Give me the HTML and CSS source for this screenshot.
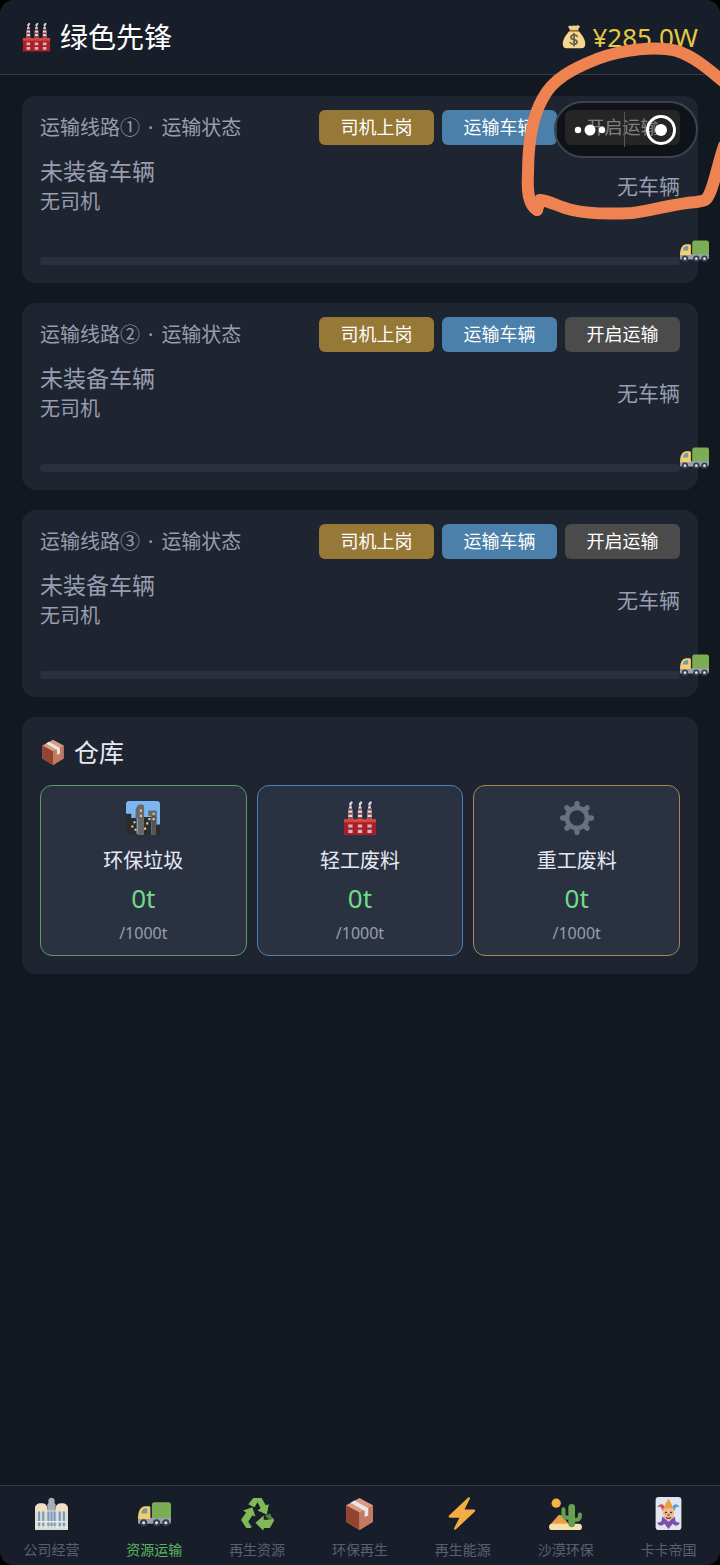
FILE: index.html
```html
<!DOCTYPE html>
<html lang="zh-CN">
<head>
<meta charset="utf-8">
<meta name="viewport" content="width=device-width, initial-scale=1">
<title>绿色先锋</title>
<link rel="stylesheet" href="styles.css">
</head>
<body>
<svg class="sprite" aria-hidden="true">
  <symbol id="factory" viewBox="0 0 32 32">
    <path fill="#dfe1e6" d="M5 10 5.800 5h2.400l.8 5v8H5zM14 10l.8-5h2.400l.8 5v8h-4zM23 10l.8-5h2.400l.8 5v8h-4z"/>
    <path fill="#a63f4c" d="M5.400 7h3.200l.3 2H5.100zM14.400 7h3.200l.3 2h-3.800zM23.400 7h3.200l.3 2h-3.800zM5 11h4v2H5zM14 11h4v2h-4zM23 11h4v2h-4zM5 15h4v2H5zM14 15h4v2h-4zM23 15h4v2h-4z"/>
    <path fill="none" stroke="#d5d8de" stroke-width="2.200" stroke-linecap="round" d="M7 3.500V2.500L8 1.500M16 3.500V2.500l1-1M25 3.500V2.500l1-1"/>
    <path fill="#ab1f2c" d="M1 18h30v14H1z"/>
    <path fill="#d3493c" d="M1 17h30v3H1z"/>
    <path fill="#d8b5b9" d="M5 22h4v3H5zM14 22h4v3h-4zM23 22h4v3h-4zM5 27h4v3H5zM14 27h4v3h-4zM23 27h4v3h-4z"/>
  </symbol>
  <symbol id="money" viewBox="0 0 32 32">
    <path fill="#f4d890" d="M10 8h12c4 4 9 11 9 17 0 4-2 6-5 6H6c-3 0-5-2-5-6C1 19 6 12 10 8z"/>
    <path fill="#f0cf86" d="M8 2c3-2 4 0 6-1s3 0 4 0 3-2 6 1l-3 5H11z"/>
    <path stroke="#b8793f" stroke-width="2" stroke-linecap="round" d="M10.500 8h11"/>
    <path fill="none" stroke="#69614f" stroke-width="2.400" stroke-linecap="round" d="M20 15c-2-3-8-2-8 1.500 0 4 8 2 8 6 0 4-7 4-9 1M16 11.500v16"/>
  </symbol>
  <symbol id="truck" viewBox="0 0 32 32">
    <rect x="13.500" y="5" width="18.500" height="17" rx="2.500" fill="#7bad53"/>
    <path fill="#9aa1ae" d="M0 20h32v4c0 1-1 2-2 2H1c-1 0-1-1-1-2z"/>
    <path fill="#f8ce6a" d="M0 21c0-8 3-12 7-12h4l1 1v11z"/>
    <path fill="#7398b0" d="M3 16c1-4 2-5 6-5v5z"/>
    <g fill="#dde2e8" stroke="#353f4b" stroke-width="2"><circle cx="5.500" cy="25" r="2.500"/><circle cx="18" cy="25" r="2.500"/><circle cx="27" cy="25" r="2.500"/></g>
  </symbol>
  <symbol id="box" viewBox="0 0 32 32">
    <path fill="#d99a83" d="M16 1 29 8v16L16 32 3 24V8z"/>
    <path fill="#93432f" d="M3 8l13 7v17L3 24z"/>
    <path fill="#c47a61" d="M16 15l13-7v16l-13 8z"/>
    <path fill="#e9e7e5" d="M7.500 5.500 11 3.500 24.500 11v7L21 19.500v-6z"/>
  </symbol>
  <symbol id="city" viewBox="0 0 32 32">
    <rect width="32" height="31" rx="3" fill="#7cb6f1"/>
    <path fill="#2b2c2e" d="M0 12h5v4h5v16H0zM15 15h9v17h-9zM28 22h4v10h-4z"/>
    <path fill="#68696c" d="M9 8l2-4 3-1 3 1v28h-6V16H9zM21 9h8v13h-5v-8h-3zM24 20h4v12h-4z"/>
    <path fill="#505255" d="M24 14h4v18h-3z"/>
    <path fill="#e9cc7d" d="M13 8h2v2h-2zM13 13h2v2h-2zM7 19h2v2H7zM5 23h2v2H5zM8 26h2v2H8zM21 16h2v2h-2zM19 20h2v2h-2zM17 25h2v2h-2zM25 11h2v2h-2zM25 16h2v2h-2z"/>
  </symbol>
  <symbol id="gear" viewBox="0 0 32 32">
    <circle cx="16" cy="16" r="9.500" fill="none" stroke="#6a717e" stroke-width="4.500"/>
    <path stroke="#6a717e" stroke-width="5" stroke-linecap="round" d="M16 2.500V5M16 27v2.500M2.500 16H5M27 16h2.500M6.500 6.500l2 2M23.500 23.500l2 2M25.500 6.500l-2 2M8.500 23.500l-2 2"/>
  </symbol>
  <symbol id="office" viewBox="0 0 32 32">
    <path fill="#dedbd2" d="M0 12h32v20H0z"/>
    <path fill="#efdfc4" d="M0 14v-3c0-3 2-5 6-5s6 2 6 5v3zM20 14v-3c0-3 2-5 6-5s6 2 6 5v3z"/>
    <path fill="#a9adb5" d="M12 13V7l1-1V3c1-3 5-3 6 0v3l1 1v6z"/>
    <path fill="#719ac0" d="M3 14h2v16H3zM7 14h2v16H7zM12 14h2v16h-2zM15 14h2v16h-2zM18 14h2v16h-2zM23 14h2v16h-2zM27 14h2v16h-2z"/>
    <path stroke="#eceae5" stroke-width="1.500" d="M0 24h32M0 29h32"/>
  </symbol>
  <symbol id="recycle" viewBox="0 0 32 32">
    <path fill="#4c7f34" d="M8 7 12 1h5l-4 9zM3 19l8 10-5 1-5-8zM23 18l5-2 4 7-3 1z"/>
    <path fill="#80b958" d="M12 1h8l4 7 3-1-2 10-9-4 3-2-5-10zM2 13l9-3 3 9-3-1-4 6 3 6H5l-5-8 5-7zM14 25l8-7v4h7l2-2 1 3-4 7h-6v3z"/>
    <path fill="#80b958" d="M12 1h3l1 4-3 5-6-3z"/>
  </symbol>
  <symbol id="bolt" viewBox="0 0 32 32">
    <path fill="#f4ad43" d="M21 1 3 18c-1 1 0 2 1 2h9L8 30c-1 2 1 2 2 1l18-17c1-1 0-2-1-2h-9l5-10c1-2-1-2-2-1z"/>
  </symbol>
  <symbol id="desert" viewBox="0 0 32 32">
    <circle cx="7" cy="6" r="4.500" fill="#f4b247"/>
    <path fill="#e9a044" d="M1 27 9 18c1-1 2-1 3 0l8 9z"/>
    <rect y="26" width="32" height="6" rx="3" fill="#f8dfac"/>
    <g fill="none" stroke="#659e4f" stroke-linecap="round"><path stroke-width="6.500" d="M22 10v16"/><path stroke-width="4" d="M22 20h-5c-2 0-3-1-3-4v-4M22 22h5c2 0 3-1 3-5"/></g>
    <path fill="none" stroke="#80b75e" stroke-width="1" stroke-dasharray="1 2" d="M20.500 9v17M23.500 9v17"/>
  </symbol>
  <symbol id="joker" viewBox="0 0 32 32">
    <rect x="3.500" width="25" height="32" rx="3" fill="#e3e6f1"/>
    <path fill="#cf5057" d="M13 12C12 7 8 5 5 10c5-2 4 3 6 4z"/>
    <path fill="#56a0c8" d="M19 12c1-5 5-7 8-2-5-2-4 3-6 4z"/>
    <path fill="#eda13b" d="M12 12c0-5 2-7 4-10 2 3 4 5 4 10z"/>
    <path fill="#efbc91" d="M11 11h10c2 7-1 11-5 12-4-1-7-5-5-12z"/>
    <path fill="#7952aa" d="M10 19l6 5 6-5 1 5 4 1c-2 4-5 3-7 1l-4 5-4-5c-2 2-5 3-7-1l4-1z"/>
    <path fill="none" stroke="#463349" stroke-width="1.300" stroke-linecap="round" d="M13 15h1M18 15h1M14 20c1 1 3 1 4 0"/>
    <circle cx="16" cy="17.500" r="1.200" fill="#d94b45"/>
  </symbol>
</svg>

<div class="app">
  <header class="header">
    <h1 class="brand"><svg class="brand-icon"><use href="#factory"/></svg>绿色先锋</h1>
    <div class="balance"><svg class="balance-icon"><use href="#money"/></svg>¥285.0W</div>
  </header>

  <main class="content">
    <section class="card route">
      <div class="route-head">
        <h2 class="route-title"><span>运输线路①</span><span>·</span><span>运输状态</span></h2>
        <div class="actions">
          <button class="btn btn-driver" type="button">司机上岗</button>
          <button class="btn btn-vehicle" type="button">运输车辆</button>
          <button class="btn btn-start" type="button">开启运输</button>
        </div>
      </div>
      <div class="route-body">
        <div><p class="vehicle">未装备车辆</p><p class="driver">无司机</p></div>
        <p class="status">无车辆</p>
      </div>
      <div class="track"><svg class="track-truck"><use href="#truck"/></svg></div>
    </section>

    <section class="card route">
      <div class="route-head">
        <h2 class="route-title"><span>运输线路②</span><span>·</span><span>运输状态</span></h2>
        <div class="actions">
          <button class="btn btn-driver" type="button">司机上岗</button>
          <button class="btn btn-vehicle" type="button">运输车辆</button>
          <button class="btn btn-start" type="button">开启运输</button>
        </div>
      </div>
      <div class="route-body">
        <div><p class="vehicle">未装备车辆</p><p class="driver">无司机</p></div>
        <p class="status">无车辆</p>
      </div>
      <div class="track"><svg class="track-truck"><use href="#truck"/></svg></div>
    </section>

    <section class="card route">
      <div class="route-head">
        <h2 class="route-title"><span>运输线路③</span><span>·</span><span>运输状态</span></h2>
        <div class="actions">
          <button class="btn btn-driver" type="button">司机上岗</button>
          <button class="btn btn-vehicle" type="button">运输车辆</button>
          <button class="btn btn-start" type="button">开启运输</button>
        </div>
      </div>
      <div class="route-body">
        <div><p class="vehicle">未装备车辆</p><p class="driver">无司机</p></div>
        <p class="status">无车辆</p>
      </div>
      <div class="track"><svg class="track-truck"><use href="#truck"/></svg></div>
    </section>

    <section class="card warehouse">
      <h2 class="warehouse-title"><svg class="warehouse-icon"><use href="#box"/></svg>仓库</h2>
      <div class="stocks">
        <article class="stock stock-green">
          <svg class="stock-icon"><use href="#city"/></svg>
          <h3 class="stock-name">环保垃圾</h3>
          <p class="stock-amount">0t</p>
          <p class="stock-limit">/1000t</p>
        </article>
        <article class="stock stock-blue">
          <svg class="stock-icon"><use href="#factory"/></svg>
          <h3 class="stock-name">轻工废料</h3>
          <p class="stock-amount">0t</p>
          <p class="stock-limit">/1000t</p>
        </article>
        <article class="stock stock-amber">
          <svg class="stock-icon"><use href="#gear"/></svg>
          <h3 class="stock-name">重工废料</h3>
          <p class="stock-amount">0t</p>
          <p class="stock-limit">/1000t</p>
        </article>
      </div>
    </section>
  </main>

  <nav class="nav">
    <a class="nav-item" href="#company"><svg class="nav-icon"><use href="#office"/></svg>公司经营</a>
    <a class="nav-item nav-active" href="#transport" aria-current="page"><svg class="nav-icon"><use href="#truck"/></svg>资源运输</a>
    <a class="nav-item" href="#resources"><svg class="nav-icon"><use href="#recycle"/></svg>再生资源</a>
    <a class="nav-item" href="#renewal"><svg class="nav-icon"><use href="#box"/></svg>环保再生</a>
    <a class="nav-item" href="#energy"><svg class="nav-icon"><use href="#bolt"/></svg>再生能源</a>
    <a class="nav-item" href="#sand"><svg class="nav-icon"><use href="#desert"/></svg>沙漠环保</a>
    <a class="nav-item" href="#cards"><svg class="nav-icon"><use href="#joker"/></svg>卡卡帝国</a>
  </nav>

  <div class="capsule">
    <button class="capsule-btn" type="button" aria-label="更多"><svg width="36" height="30" viewBox="0 0 36 30" fill="#fff"><circle cx="6" cy="15" r="3.200"/><circle cx="18" cy="15" r="5.500"/><circle cx="30" cy="15" r="3.200"/></svg></button>
    <button class="capsule-btn" type="button" aria-label="关闭"><svg width="32" height="32" viewBox="0 0 32 32"><circle cx="16" cy="16" r="13.500" fill="none" stroke="#fff" stroke-width="3"/><circle cx="16" cy="16" r="6" fill="#fff"/></svg></button>
  </div>

  <svg class="scribble" viewBox="0 0 220 230" aria-hidden="true">
    <path d="M37 210C28 204 27 190 28 174C28 145 32 117 43 98C53 79 72 69 97 59C123 49 157 46 177 51C195 57 208 69 224 82"/>
    <path d="M224 146C219 160 216 177 211 190C207 201 205 201 196 202C172 204 150 211 132 213C110 214 88 214 72 210C59 207 50 201 40 200L37 210L31 201"/>
  </svg>
</div>
</body>
</html>
```
FILE: styles.css
```css
* {
  box-sizing: border-box;
}

html {
  background: #000;
}

body {
  margin: 0;
  color: #e6e9f2;
  font-family: "Noto Sans", "Noto Sans CJK SC", sans-serif;
}

h1, h2, h3, p {
  margin: 0;
  font-weight: 400;
}

svg {
  display: block;
  flex-shrink: 0;
}

.sprite {
  position: absolute;
  width: 0;
  height: 0;
}

.app {
  position: relative;
  display: flex;
  flex-direction: column;
  min-height: 100vh;
  overflow: hidden;
  border-radius: 14px;
  background: #111820;
}

.header {
  display: flex;
  align-items: center;
  justify-content: space-between;
  padding: 17px 22px;
  border-bottom: 1px solid #343a45;
  background: #181e29;
}

.brand {
  display: flex;
  align-items: center;
  gap: 9px;
  color: #fff;
  font-size: 28px;
  line-height: 40px;
}

.brand-icon {
  width: 29px;
  height: 30px;
}

.balance {
  display: flex;
  align-items: center;
  gap: 6px;
  color: #e5c943;
  font-size: 26px;
  line-height: 40px;
}

.balance-icon {
  width: 24px;
  height: 26px;
}

.content {
  display: flex;
  flex: 1;
  flex-direction: column;
  gap: 20px;
  padding: 21px 22px;
}

.card {
  padding: 14px 18px 18px;
  border-radius: 14px;
  background: #1e2531;
}

.route-head {
  display: flex;
  align-items: center;
  justify-content: space-between;
}

.route-title {
  display: flex;
  gap: 8px;
  color: #989daf;
  font-size: 20px;
  line-height: 32px;
}

.actions {
  display: grid;
  grid-template-columns: repeat(3, 115px);
  gap: 8px;
}

.btn {
  height: 35px;
  padding: 0;
  border: 0;
  border-radius: 6px;
  color: #fff;
  font-family: inherit;
  font-size: 18px;
  line-height: 35px;
}

.btn-driver {
  background: #967936;
}

.btn-vehicle {
  background: #4a80aa;
}

.btn-start {
  background: #4b4b4b;
}

.route-body {
  display: flex;
  align-items: center;
  justify-content: space-between;
  padding: 10px 0 40px;
  color: #989daf;
}

.vehicle {
  font-size: 23px;
  line-height: 32px;
}

.driver {
  font-size: 20px;
  line-height: 30px;
}

.status {
  font-size: 21px;
  line-height: 32px;
}

.track {
  position: relative;
  height: 8px;
  border-radius: 4px;
  background: #2a303d;
}

.track-truck {
  position: absolute;
  bottom: 0;
  left: 100%;
  width: 29px;
  height: 29px;
}

.warehouse-title {
  display: flex;
  align-items: center;
  gap: 8px;
  margin-bottom: 12px;
  font-size: 25px;
  line-height: 42px;
}

.warehouse-icon {
  width: 26px;
  height: 26px;
}

.stocks {
  display: grid;
  grid-template-columns: repeat(3, 1fr);
  gap: 10px;
}

.stock {
  display: flex;
  flex-direction: column;
  align-items: center;
  padding: 15px 8px 8px;
  border: 1px solid;
  border-radius: 12px;
  background: #2a3242;
}

.stock-green {
  border-color: #5c9c60;
}

.stock-blue {
  border-color: #4c82b2;
}

.stock-amber {
  border-color: #ac8652;
}

.stock-icon {
  width: 34px;
  height: 34px;
  margin-bottom: 10px;
}

.stock-name {
  font-size: 20px;
  line-height: 32px;
}

.stock-amount {
  color: #72da86;
  font-size: 26px;
  line-height: 42px;
}

.stock-limit {
  color: #989daf;
  font-size: 16px;
  line-height: 28px;
}

.nav {
  display: grid;
  grid-template-columns: repeat(7, 1fr);
  border-top: 1px solid #343a45;
  background: #181e29;
}

.nav-item {
  display: flex;
  flex-direction: column;
  align-items: center;
  gap: 10px;
  padding: 11px 0 5px;
  color: #5a6072;
  font-size: 14px;
  line-height: 20px;
  text-decoration: none;
}

.nav-active {
  color: #55b760;
}

.nav-icon {
  width: 33px;
  height: 33px;
}

.capsule {
  position: absolute;
  top: 101px;
  right: 22px;
  display: grid;
  grid-template-columns: 68px 1fr;
  align-items: center;
  width: 144px;
  height: 57px;
  border: 2px solid #3d434c;
  border-radius: 29px;
  background: rgb(0 0 0 / 50%);
}

.capsule-btn {
  display: flex;
  align-items: center;
  justify-content: center;
  height: 35px;
  padding: 0;
  border: 0;
  background: none;
}

.capsule-btn + .capsule-btn {
  border-left: 1px solid #575b61;
}

.scribble {
  position: absolute;
  top: 0;
  right: 0;
  width: 220px;
  height: 230px;
  fill: none;
  stroke: #ee8251;
  stroke-width: 12px;
  stroke-linecap: round;
  stroke-linejoin: round;
  pointer-events: none;
}
```
